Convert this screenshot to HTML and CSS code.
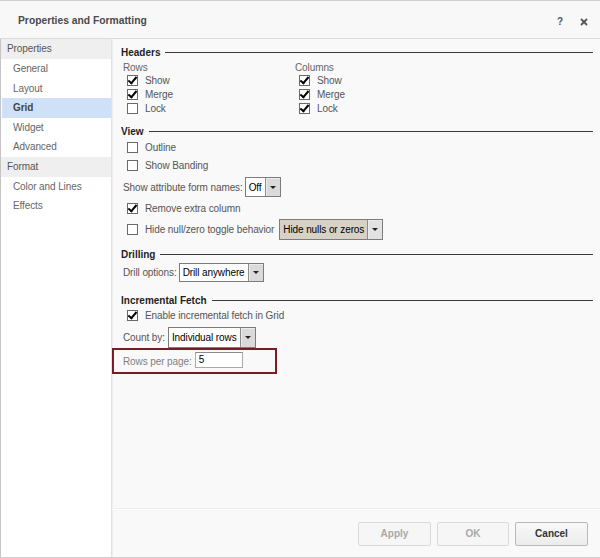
FILE: index.html
```html
<!DOCTYPE html>
<html>
<head>
<meta charset="utf-8">
<title>Properties and Formatting</title>
<link rel="stylesheet" href="styles.css">
</head>
<body>
<div class="dialog">
  <header class="titlebar">
    <span class="title">Properties and Formatting</span>
    <div class="tools">
      <span class="help">?</span>
      <span class="close"><svg width="8" height="8" viewBox="0 0 8 8"><path d="M1 1L7 7M7 1L1 7" stroke="#555" stroke-width="1.8" fill="none"/></svg></span>
    </div>
  </header>
  <div class="body">
    <nav class="sidebar">
      <div class="group">Properties</div>
      <div class="item">General</div>
      <div class="item">Layout</div>
      <div class="item selected">Grid</div>
      <div class="item">Widget</div>
      <div class="item">Advanced</div>
      <div class="group">Format</div>
      <div class="item">Color and Lines</div>
      <div class="item">Effects</div>
    </nav>
    <main class="panel">
      <div class="content">
        <div class="sec">Headers</div>
        <div class="cols">
          <div class="col">
            <div class="col-label">Rows</div>
            <div class="chk"><span class="box on"></span>Show</div>
            <div class="chk"><span class="box on"></span>Merge</div>
            <div class="chk"><span class="box"></span>Lock</div>
          </div>
          <div class="col">
            <div class="col-label">Columns</div>
            <div class="chk"><span class="box on"></span>Show</div>
            <div class="chk"><span class="box on"></span>Merge</div>
            <div class="chk"><span class="box on"></span>Lock</div>
          </div>
        </div>

        <div class="sec view">View</div>
        <div class="chk tall"><span class="box"></span>Outline</div>
        <div class="chk tall"><span class="box"></span>Show Banding</div>
        <div class="field attr">Show attribute form names:
          <div class="select"><span class="val">Off</span><span class="btn"><i class="arrow"></i></span></div>
        </div>
        <div class="chk remove"><span class="box on"></span>Remove extra column</div>
        <div class="chk hide"><span class="box"></span>Hide null/zero toggle behavior
          <div class="select beige"><span class="val">Hide nulls or zeros</span><span class="btn"><i class="arrow"></i></span></div>
        </div>

        <div class="sec drilling">Drilling</div>
        <div class="field drill">Drill options:
          <div class="select"><span class="val">Drill anywhere</span><span class="btn"><i class="arrow"></i></span></div>
        </div>

        <div class="sec fetch">Incremental Fetch</div>
        <div class="chk enable"><span class="box on"></span>Enable incremental fetch in Grid</div>
        <div class="field count">Count by:
          <div class="select"><span class="val">Individual rows</span><span class="btn"><i class="arrow"></i></span></div>
        </div>
        <div class="highlight">Rows per page:<span class="input">5</span></div>
      </div>
      <footer class="footer">
        <button class="btn-act disabled apply">Apply</button>
        <button class="btn-act disabled ok">OK</button>
        <button class="btn-act cancel">Cancel</button>
      </footer>
    </main>
  </div>
</div>
</body>
</html>
```
FILE: styles.css
```css
html, body {
  margin: 0;
  padding: 0;
  background: #fff;
}
body {
  font-family: "Liberation Sans", Arial, sans-serif;
  font-size: 10px;
  letter-spacing: -0.1px;
  color: #555;
}
.dialog {
  width: 600px;
  height: 558px;
  box-sizing: border-box;
  border-top: 1px solid #d0d0d0;
  border-bottom: 1px solid #d0d0d0;
  display: flex;
  flex-direction: column;
}
.titlebar {
  height: 37px;
  flex: none;
  display: flex;
  align-items: center;
  justify-content: space-between;
  padding: 1px 12px 0 18px;
  box-sizing: border-box;
  background: #f8f8f8;
  border-bottom: 1px solid #dcdcdc;
  height: 38px;
}
.title {
  font-weight: bold;
  color: #4a4a4a;
  font-size: 10.3px;
  letter-spacing: 0;
}
.tools {
  display: flex;
  align-items: center;
  gap: 17px;
  padding-top: 3px;
}
.help {
  font-weight: bold;
  color: #555;
  font-size: 10px;
}
.close {
  display: flex;
}
.body {
  flex: 1;
  display: flex;
  min-height: 0;
}
.sidebar {
  width: 111px;
  flex: none;
  box-sizing: border-box;
  border-left: 1px solid #c4c4c4;
  background: #fff;
}
.group {
  height: 20px;
  line-height: 20px;
  padding-left: 6px;
  background: #efefef;
  color: #555;
}
.item {
  height: 19.5px;
  line-height: 19.5px;
  padding-left: 12px;
  color: #666;
}
.item.selected {
  background: #cfe1f6;
  margin-left: 1px;
  padding-left: 11px;
  font-weight: bold;
  color: #444;
}
.panel {
  flex: 1;
  display: flex;
  flex-direction: column;
  background: #f9f9f9;
  border-left: 1px solid #e3e3e3;
  box-shadow: inset 1px 0 0 #eeeeee;
}
.content {
  flex: 1;
  padding: 6px 7px 0 9px;
}
.sec {
  display: flex;
  align-items: center;
  gap: 5px;
  height: 14px;
  font-weight: bold;
  color: #1e1e1e;
  letter-spacing: 0;
}
.sec::after {
  content: "";
  flex: 1;
  border-top: 1px solid #3a3a3a;
}
.sec.view { margin-top: 9px; }
.sec.drilling { margin-top: 7px; }
.sec.fetch { margin-top: 11px; }
.cols {
  display: flex;
}
.col {
  width: 172px;
}
.col-label {
  height: 11px;
  line-height: 11px;
  margin-top: 3px;
  padding-left: 2px;
  color: #666;
}
.chk {
  display: flex;
  align-items: center;
  height: 14px;
  padding-left: 6px;
  color: #555;
}
.chk.tall { height: 18px; }
.chk.remove { height: 22px; }
.chk.hide { height: 21px; }
.chk.enable { height: 16px; }
.box {
  width: 11px;
  height: 11px;
  box-sizing: border-box;
  border: 1px solid #6a6a6a;
  background: #fff;
  margin-right: 7px;
  flex: none;
  position: relative;
}
.box.on::after {
  content: "";
  position: absolute;
  left: 2px;
  top: -1px;
  width: 3px;
  height: 7px;
  border-right: 2px solid #000;
  border-bottom: 2px solid #000;
  transform: rotate(40deg);
}
.field {
  display: flex;
  align-items: center;
  padding-left: 2px;
  color: #555;
}
.field.attr { margin-top: 3px; height: 20px; gap: 2px; }
.field.drill { margin-top: 2px; height: 19px; gap: 2px; }
.field.count { margin-top: 4px; height: 21px; gap: 3px; }
.select {
  display: flex;
  align-items: stretch;
  height: 100%;
  box-sizing: border-box;
  border: 1px solid #7c7c7c;
  background: #fff;
}
.select .val {
  display: flex;
  align-items: center;
  padding: 0 3px 0 3px;
  color: #000;
}
.select .btn {
  width: 14px;
  display: flex;
  align-items: center;
  justify-content: center;
  border-left: 1px solid #8c8c8c;
  background: #dadada;
  box-shadow: inset 1px 1px 0 #ececec;
}
.arrow {
  width: 0;
  height: 0;
  border-left: 3px solid transparent;
  border-right: 3px solid transparent;
  border-top: 3px solid #222;
}
.chk.hide .select {
  margin-left: 5px;
  height: 21px;
}
.select.beige .val {
  background: #d7d1c6;
  padding-right: 3px;
}
.select.beige .btn {
  background: #e2e2e2;
}
.highlight {
  margin-left: -9px;
  width: 165px;
  height: 26px;
  box-sizing: border-box;
  border: 2px solid #7a1c25;
  display: flex;
  align-items: center;
  padding-left: 9px;
  gap: 3px;
  color: #808080;
}
.input {
  width: 48px;
  height: 16px;
  box-sizing: border-box;
  border: 1px solid #a9a9a9;
  border-top-color: #8a8a8a;
  background: #fff;
  color: #000;
  padding-left: 3px;
  line-height: 14px;
  margin-top: -2px;
}
.footer {
  height: 47px;
  flex: none;
  border-top: 1px solid #ffffff;
  box-shadow: 0 -1px 0 #efefef;
  display: flex;
  align-items: center;
  justify-content: flex-end;
  gap: 6px;
  padding-right: 12px;
}
.btn-act {
  height: 24px;
  width: 73px;
  padding: 0;
  font-family: "Liberation Sans", Arial, sans-serif;
  font-size: 10px;
  font-weight: bold;
  border: 1px solid #dadada;
  border-radius: 2px;
  background: #f6f6f6;
  color: #a8a8a8;
}
.btn-act.ok { width: 72px; }
.btn-act.cancel {
  border-color: #b9b9b9;
  background: linear-gradient(#f8f8f8, #ececec);
  color: #333;
}
```
